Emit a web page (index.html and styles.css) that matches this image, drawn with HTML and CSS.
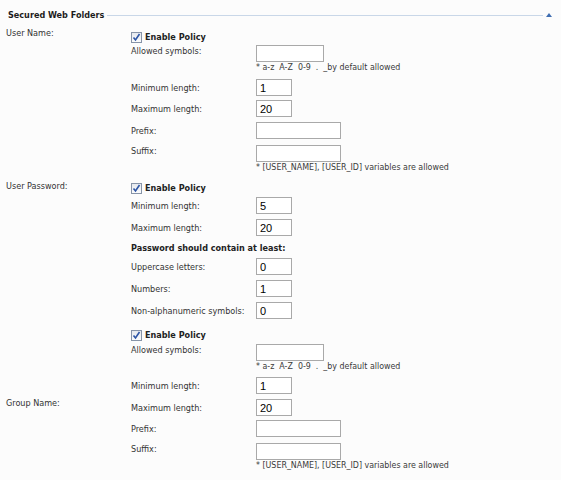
FILE: index.html
```html
<!DOCTYPE html>
<html>
<head>
<meta charset="utf-8">
<link rel="stylesheet" href="styles.css">
</head>
<body>
<div class="head">
  <span class="title">Secured Web Folders</span>
  <span class="rule"></span>
  <span class="arrow"></span>
</div>

<div class="section s1">
  <div class="side">User Name:</div>
  <div class="body">
    <div class="enable e1"><span class="cb"><svg width="9" height="9" viewBox="0 0 9 9"><path d="M1.5 4.5 L3.5 7 L7.5 1" fill="none" stroke="#2d55a6" stroke-width="1.6"/></svg></span><b>Enable Policy</b></div>
    <div class="field top"><div class="lbl">Allowed symbols:</div><div class="ctl"><input class="w68" type="text"><div class="hint">*&nbsp;a-z&nbsp;&nbsp;A-Z&nbsp;&nbsp;0-9&nbsp;&nbsp;.&nbsp;&nbsp;_by default allowed</div></div></div>
    <div class="field mt6"><div class="lbl">Minimum length:</div><div class="ctl"><input class="w36" type="text" value="1"></div></div>
    <div class="field mt4"><div class="lbl">Maximum length:</div><div class="ctl"><input class="w36" type="text" value="20"></div></div>
    <div class="field mt5"><div class="lbl">Prefix:</div><div class="ctl"><input class="w85" type="text"></div></div>
    <div class="field top mt6"><div class="lbl">Suffix:</div><div class="ctl"><input class="w85" type="text"><div class="hint">* [USER_NAME], [USER_ID] variables are allowed</div></div></div>
  </div>
</div>

<div class="section s2">
  <div class="side">User Password:</div>
  <div class="body">
    <div class="enable"><span class="cb"><svg width="9" height="9" viewBox="0 0 9 9"><path d="M1.5 4.5 L3.5 7 L7.5 1" fill="none" stroke="#2d55a6" stroke-width="1.6"/></svg></span><b>Enable Policy</b></div>
    <div class="field mt1"><div class="lbl">Minimum length:</div><div class="ctl"><input class="w36" type="text" value="5"></div></div>
    <div class="field mt5"><div class="lbl">Maximum length:</div><div class="ctl"><input class="w36" type="text" value="20"></div></div>
    <div class="subhead">Password should contain at least:</div>
    <div class="field mt4"><div class="lbl">Uppercase letters:</div><div class="ctl"><input class="w36" type="text" value="0"></div></div>
    <div class="field mt5"><div class="lbl">Numbers:</div><div class="ctl"><input class="w36" type="text" value="1"></div></div>
    <div class="field mt5"><div class="lbl">Non-alphanumeric symbols:</div><div class="ctl"><input class="w36" type="text" value="0"></div></div>
  </div>
</div>

<div class="section s3">
  <div class="side mid">Group Name:</div>
  <div class="body">
    <div class="enable"><span class="cb"><svg width="9" height="9" viewBox="0 0 9 9"><path d="M1.5 4.5 L3.5 7 L7.5 1" fill="none" stroke="#2d55a6" stroke-width="1.6"/></svg></span><b>Enable Policy</b></div>
    <div class="field top mt1"><div class="lbl">Allowed symbols:</div><div class="ctl"><input class="w68" type="text"><div class="hint">*&nbsp;a-z&nbsp;&nbsp;A-Z&nbsp;&nbsp;0-9&nbsp;&nbsp;.&nbsp;&nbsp;_by default allowed</div></div></div>
    <div class="field mt5"><div class="lbl">Minimum length:</div><div class="ctl"><input class="w36" type="text" value="1"></div></div>
    <div class="field mt5"><div class="lbl">Maximum length:</div><div class="ctl"><input class="w36" type="text" value="20"></div></div>
    <div class="field mt4"><div class="lbl">Prefix:</div><div class="ctl"><input class="w85" type="text"></div></div>
    <div class="field top mt6"><div class="lbl">Suffix:</div><div class="ctl"><input class="w85" type="text"><div class="hint">* [USER_NAME], [USER_ID] variables are allowed</div></div></div>
  </div>
</div>
</body>
</html>
```
FILE: styles.css
```css
html, body {
  margin: 0;
  padding: 0;
  background: #fcfcfc;
}
body {
  width: 561px;
  height: 480px;
  overflow: hidden;
  font-family: "DejaVu Sans Condensed", "DejaVu Sans", sans-serif;
  font-size: 9px;
  color: #333;
}
.head {
  display: flex;
  align-items: center;
  height: 14px;
  margin-top: 8px;
  padding: 0 9px 0 8px;
}
.title {
  font-weight: bold;
  color: #1c1c1c;
  font-size: 9px;
  line-height: 14px;
}
.rule {
  flex: 1;
  height: 1px;
  background: #c9d7e8;
  margin: 1px 3px 0 3px;
}
.arrow {
  width: 0;
  height: 0;
  border-left: 3px solid transparent;
  border-right: 3px solid transparent;
  border-bottom: 4px solid #3f6db1;
  margin-top: -1px;
}
.section {
  display: grid;
  grid-template-columns: 125px 1fr;
  padding-left: 6px;
}
.s1 { margin-top: 5px; }
.s2 { margin-top: 7px; }
.s3 { margin-top: 8px; }
.side {
  line-height: 12px;
  align-self: start;
}
.side.mid {
  align-self: center;
  margin-top: 8px;
}
.body {
  display: flex;
  flex-direction: column;
}
.enable {
  display: flex;
  align-items: center;
  height: 16px;
}
.e1 { margin-top: 2px; }
.enable b {
  color: #222;
  margin-left: 3px;
}
.cb {
  width: 11px;
  height: 11px;
  box-sizing: border-box;
  border: 1px solid #8794a8;
  background: linear-gradient(#e6e9ee, #fbfcfd);
  display: flex;
  align-items: center;
  justify-content: center;
}
.cb svg { display: block; }
.field {
  display: flex;
  align-items: center;
}
.field.top { align-items: flex-start; }
.lbl {
  width: 125px;
  line-height: 12px;
  flex-shrink: 0;
}
.ctl {
  display: flex;
  flex-direction: column;
}
.ctl input {
  height: 17px;
  box-sizing: border-box;
  border: 1px solid #a9a9a9;
  background: #fff;
  margin: 0;
  padding: 0 3px;
  font-family: "Liberation Sans", Arial, sans-serif;
  font-size: 11px;
  color: #000;
  outline: none;
}
.w36 { width: 36px; }
.w68 { width: 68px; }
.w85 { width: 85px; }
.hint {
  line-height: 11px;
  font-size: 8.8px;
  color: #3a3a3a;
  white-space: nowrap;
}
.subhead {
  font-weight: bold;
  color: #222;
  line-height: 12px;
  margin-top: 6px;
}
.mt1 { margin-top: 1px; }
.mt4 { margin-top: 4px; }
.mt5 { margin-top: 5px; }
.mt6 { margin-top: 6px; }
```
